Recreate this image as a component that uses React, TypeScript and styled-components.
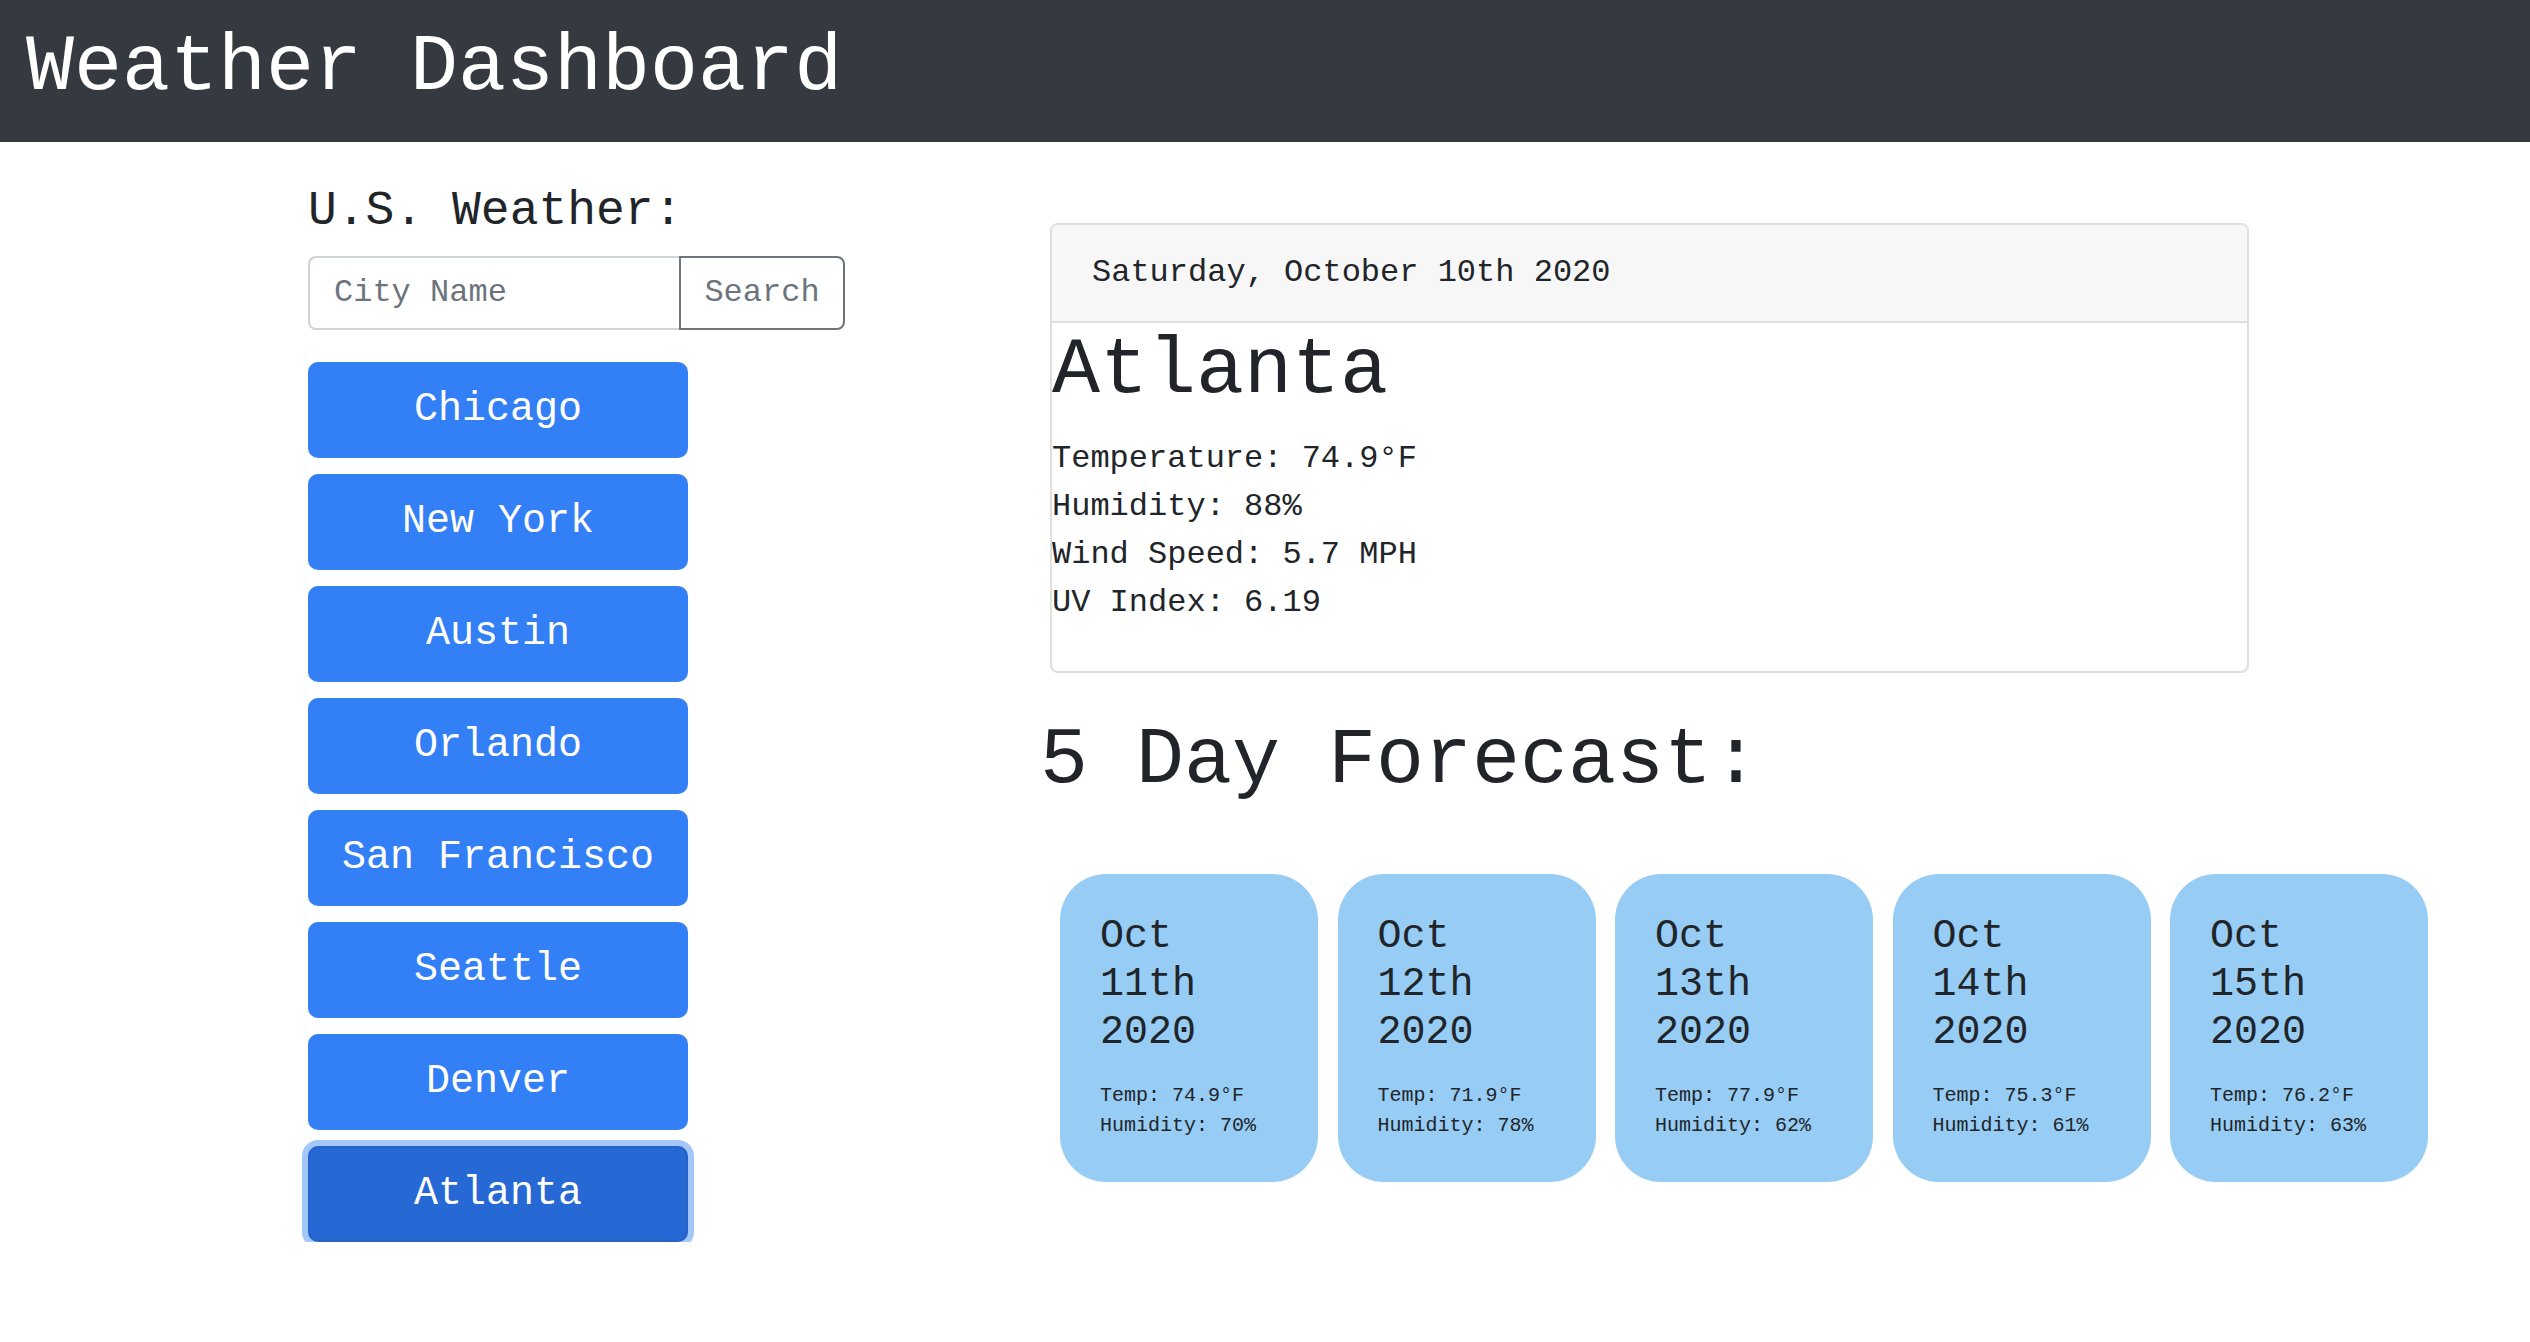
import React from "react";
import styled, { createGlobalStyle } from "styled-components";

const GlobalStyle = createGlobalStyle`
  * { box-sizing: border-box; }
  html, body { margin: 0; padding: 0; background: #ffffff; }
  body {
    font-family: "Liberation Mono", "Courier New", monospace;
    color: #212529;
    font-size: 32px;
    line-height: 1.5;
  }
`;

const TopBar = styled.header`
  height: 142px;
  background: #343a40;
  display: flex;
  align-items: flex-start;
  padding: 20px 26px 0;
`;

const Title = styled.h1`
  margin: 0;
  color: #ffffff;
  font-size: 80px;
  font-weight: 400;
  line-height: 96px;
`;

const Main = styled.main`
  display: flex;
  align-items: flex-start;
  padding-left: 308px;
`;

const SideColumn = styled.section`
  width: 537px;
  padding-top: 41px;
  display: flex;
  flex-direction: column;
`;

const SideHeading = styled.h4`
  margin: 0 0 15px;
  font-size: 48px;
  font-weight: 400;
  line-height: 57.6px;
`;

const SearchGroup = styled.form`
  display: flex;
  height: 74px;
  margin-bottom: 32px;
`;

const CityInput = styled.input`
  width: 371px;
  height: 100%;
  padding: 0 24px;
  font-family: inherit;
  font-size: 32px;
  color: #495057;
  border: 2px solid #ced4da;
  border-right: none;
  border-radius: 8px 0 0 8px;
  outline: none;
  background: #fff;
  &::placeholder { color: #6c757d; }
`;

const SearchButton = styled.button`
  width: 166px;
  height: 100%;
  font-family: inherit;
  font-size: 32px;
  color: #6c757d;
  background: #fff;
  border: 2px solid #6c757d;
  border-radius: 0 8px 8px 0;
  padding: 0;
  cursor: pointer;
`;

const CityList = styled.div`
  display: flex;
  flex-direction: column;
  gap: 16px;
`;

const CityButton = styled.button<{ $active?: boolean }>`
  width: 380px;
  height: 96px;
  font-family: inherit;
  font-size: 40px;
  color: #ffffff;
  border-radius: 10px;
  cursor: pointer;
  padding: 0;
  background: ${(p) => (p.$active ? "#2769d4" : "#337ff5")};
  border: 2px solid ${(p) => (p.$active ? "#2462c8" : "#337ff5")};
  box-shadow: ${(p) => (p.$active ? "0 0 0 6px #a3c7f8" : "none")};
`;

const ContentColumn = styled.section`
  width: 1400px;
  margin-left: 195px;
  padding-top: 81px;
  display: flex;
  flex-direction: column;
`;

const CurrentCard = styled.article`
  width: 1199px;
  margin-left: 10px;
  border: 2px solid #dfdfdf;
  border-radius: 8px;
  overflow: hidden;
`;

const CardHeader = styled.div`
  background: #f7f7f7;
  border-bottom: 2px solid #dfdfdf;
  padding: 24px 40px;
  font-size: 32px;
  line-height: 48px;
`;

const CardBody = styled.div`
  padding-bottom: 44px;
`;

const CityTitle = styled.h1`
  margin: 0 0 16px;
  font-size: 80px;
  font-weight: 400;
  line-height: 96px;
`;

const StatLine = styled.div`
  font-size: 32px;
  line-height: 48px;
`;

const ForecastHeading = styled.h2`
  margin: 40px 0 0;
  font-size: 80px;
  font-weight: 400;
  line-height: 96px;
`;

const ForecastRow = styled.div`
  display: flex;
  gap: 19.5px;
  margin-top: 65px;
  padding-left: 20px;
`;

const DayCard = styled.div`
  width: 258px;
  height: 308px;
  flex: none;
  background: #97ccf4;
  border-radius: 46px;
  padding: 39px 40px;
`;

const DayDate = styled.div`
  font-size: 40px;
  line-height: 48px;
  margin-bottom: 24px;
`;

const DayStat = styled.div`
  font-size: 20px;
  line-height: 30px;
`;

const cities = [
  "Chicago",
  "New York",
  "Austin",
  "Orlando",
  "San Francisco",
  "Seattle",
  "Denver",
  "Atlanta",
];

const forecast = [
  { day: "11th", temp: "74.9", hum: "70" },
  { day: "12th", temp: "71.9", hum: "78" },
  { day: "13th", temp: "77.9", hum: "62" },
  { day: "14th", temp: "75.3", hum: "61" },
  { day: "15th", temp: "76.2", hum: "63" },
];

export default function App() {
  return (
    <>
      <GlobalStyle />
      <TopBar>
        <Title>Weather Dashboard</Title>
      </TopBar>
      <Main>
        <SideColumn>
          <SideHeading>U.S. Weather:</SideHeading>
          <SearchGroup onSubmit={(e) => e.preventDefault()}>
            <CityInput placeholder="City Name" />
            <SearchButton type="submit">Search</SearchButton>
          </SearchGroup>
          <CityList>
            {cities.map((c) => (
              <CityButton key={c} $active={c === "Atlanta"}>
                {c}
              </CityButton>
            ))}
          </CityList>
        </SideColumn>
        <ContentColumn>
          <CurrentCard>
            <CardHeader>Saturday, October 10th 2020</CardHeader>
            <CardBody>
              <CityTitle>Atlanta</CityTitle>
              <StatLine>Temperature: 74.9°F</StatLine>
              <StatLine>Humidity: 88%</StatLine>
              <StatLine>Wind Speed: 5.7 MPH</StatLine>
              <StatLine>UV Index: 6.19</StatLine>
            </CardBody>
          </CurrentCard>
          <ForecastHeading>5 Day Forecast:</ForecastHeading>
          <ForecastRow>
            {forecast.map((f) => (
              <DayCard key={f.day}>
                <DayDate>
                  Oct
                  <br />
                  {f.day}
                  <br />
                  2020
                </DayDate>
                <DayStat>Temp: {f.temp}°F</DayStat>
                <DayStat>Humidity: {f.hum}%</DayStat>
              </DayCard>
            ))}
          </ForecastRow>
        </ContentColumn>
      </Main>
    </>
  );
}
